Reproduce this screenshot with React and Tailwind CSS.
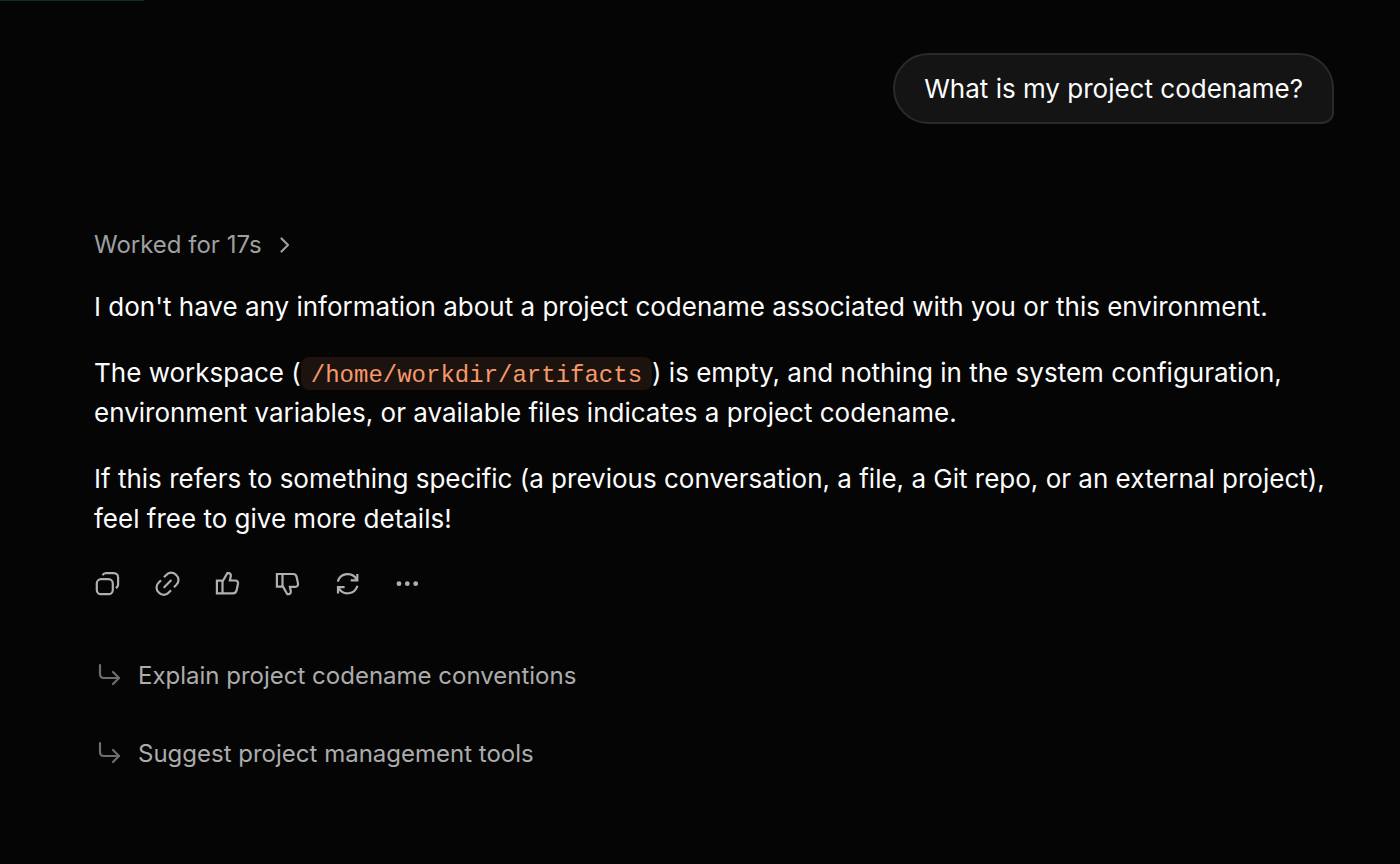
import React from "react";

const followUps = [
    "Explain project codename conventions",
    "Suggest project management tools",
];

const Icon = ({ children }) => (
    <svg
        viewBox="0 0 28 28"
        fill="none"
        stroke="currentColor"
        strokeWidth="2.2"
        className="size-7"
        aria-hidden="true"
    >
        {children}
    </svg>
);

const actions = [
    {
        label: "Copy",
        icon: (
            <>
                <rect x="2.8" y="9.2" width="16" height="15" rx="4.2" />
                <path d="M8.6 5.2C9.3 3.8 10.3 3.1 12 3.1h7.8c2.5 0 4.3 1.9 4.3 4.3v6.8c0 1.8-.7 3-2.3 3.7" />
            </>
        ),
    },
    {
        label: "Copy link",
        icon: (
            <>
                <path d="M9.7 17.7l7.7-7.7" />
                <path d="M10 7.2l2.2-2.2a6.6 6.6 0 0 1 10 0a6.6 6.6 0 0 1 0 10l-2.2 2.2" />
                <path d="M17 20.3l-2.2 2.2a6.6 6.6 0 0 1-10 0a6.6 6.6 0 0 1 0-10l2.2-2.2" />
            </>
        ),
    },
    {
        label: "Good response",
        icon: (
            <>
                <path d="M2.9 10.7h6.1L13.3 3.1h1.2c1.6 0 2.6 1.4 2.3 2.9l-.9 4.5h5.4c1.9 0 3 1.5 2.7 3.2l-1.3 6.3c-.4 2-1.8 3.3-3.7 3.3H2.9z" />
                <path d="M8.5 10.7V23.3" />
            </>
        ),
    },
    {
        label: "Bad response",
        icon: (
            <>
                <path d="M2.9 16.6h6.1l4.3 7.6h1.2c1.6 0 2.6-1.4 2.3-2.9l-.9-4.5h5.4c1.9 0 3-1.5 2.7-3.2l-1.3-6.3c-.4-2-1.8-3.3-3.7-3.3H2.9z" />
                <path d="M8.5 16.6V4" />
            </>
        ),
    },
    {
        label: "Regenerate",
        icon: (
            <>
                <path d="M3.8 11.6a10.2 10.2 0 0 1 18.9-2" />
                <path d="M23.3 3.9v6.4h-6.6" />
                <path d="M23.4 15.8a10.2 10.2 0 0 1-18.9 2" />
                <path d="M4 23.6v-6.4h6.6" />
            </>
        ),
    },
    {
        label: "More actions",
        icon: (
            <g fill="currentColor" stroke="none">
                <circle cx="5" cy="13.7" r="2.4" />
                <circle cx="13.3" cy="13.7" r="2.4" />
                <circle cx="21.7" cy="13.7" r="2.4" />
            </g>
        ),
    },
];

export default function App() {
    return (
        <div className="min-h-screen bg-[#050505] font-['Inter','Liberation_Sans',sans-serif] text-[26px] leading-10 text-[#fcfcfc]">
            <div className="h-px w-36 bg-[#062e26]"></div>
            <main className="pt-[52px] pr-[66px] pb-20 pl-[94px]">
                <div className="flex justify-end">
                    <div className="rounded-[36px] rounded-br-xl border-2 border-[#2a2a2a] bg-[#141414] px-[29px] pt-[14px] pb-[13px]">
                        What is my project codename?
                    </div>
                </div>

                <button type="button" className="mt-[101px] flex items-center gap-[10px] text-2xl leading-10 text-[#9f9f9f]">
                    Worked for 17s
                    <svg viewBox="0 0 24 24" fill="none" stroke="currentColor" strokeWidth="2.2" strokeLinecap="round" strokeLinejoin="round" className="size-6" aria-hidden="true">
                        <path d="M9.5 5.5l6.5 6.5-6.5 6.5" />
                    </svg>
                </button>

                <div className="mt-[22px] flex flex-col gap-[26px]">
                    <p>I don't have any information about a project codename associated with you or this environment.</p>
                    <p>
                        The workspace (
                        <code className="rounded-lg bg-[#1d130e] px-[10px] pt-[5px] pb-px font-['Liberation_Mono',monospace] text-2xl leading-8 text-[#f5996c]">
                            /home/workdir/artifacts
                        </code>
                        ) is empty, and nothing in the system configuration, environment variables, or available files indicates a project codename.
                    </p>
                    <p>
                        If this refers to something specific (a previous conversation, a file, a Git repo, or an external project), feel free to give more details!
                    </p>
                </div>

                <div className="mt-[31px] flex gap-8 text-[#b0b0b0]">
                    {actions.map((action) => (
                        <button key={action.label} type="button" aria-label={action.label}>
                            <Icon>{action.icon}</Icon>
                        </button>
                    ))}
                </div>

                <div className="mt-[58px] flex flex-col items-start gap-[38px] text-2xl leading-10 text-[#acacac]">
                    {followUps.map((text) => (
                        <button key={text} type="button" className="flex items-center gap-4">
                            <svg viewBox="0 0 28 28" fill="none" stroke="currentColor" strokeWidth="2.2" strokeLinecap="round" strokeLinejoin="round" className="size-7 text-[#6e6e6e]" aria-hidden="true">
                                <path d="M6 3v9c0 2.5 1.500 4 4 4h15" />
                                <path d="M19 10l6 6-6 6" />
                            </svg>
                            {text}
                        </button>
                    ))}
                </div>
            </main>
        </div>
    );
}
